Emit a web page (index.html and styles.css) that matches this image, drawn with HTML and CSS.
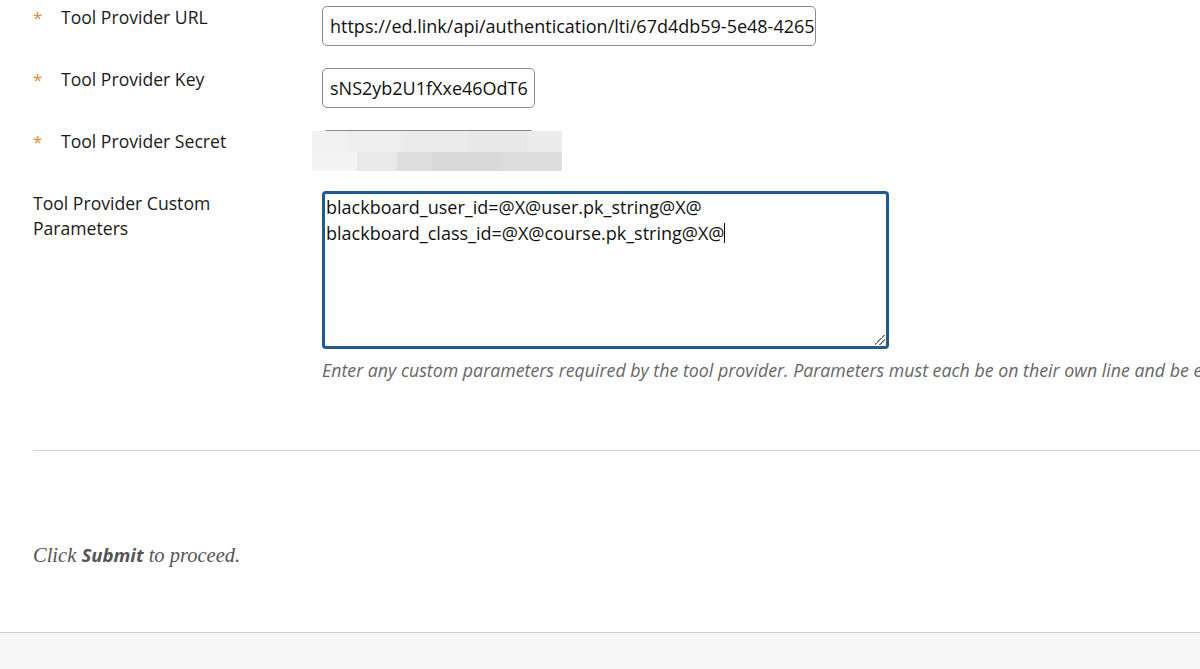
FILE: index.html
```html
<!DOCTYPE html>
<html>
<head>
<meta charset="utf-8">
<link rel="stylesheet" href="styles.css">
</head>
<body>
<div class="page">
  <div class="form">
    <div class="row">
      <div class="label"><span class="req">*</span>Tool Provider URL</div>
      <div class="field"><div class="input url">https://ed.link/api/authentication/lti/67d4db59-5e48-4265-b</div></div>
    </div>
    <div class="row">
      <div class="label"><span class="req">*</span>Tool Provider Key</div>
      <div class="field"><div class="input key">sNS2yb2U1fXxe46OdT6</div></div>
    </div>
    <div class="row">
      <div class="label"><span class="req">*</span>Tool Provider Secret</div>
      <div class="field secret-field">
        <div class="input key">&nbsp;</div>
        <div class="blur"><div class="blur-top"></div><div class="blur-bottom"></div></div>
      </div>
    </div>
    <div class="row row-area">
      <div class="label plain">Tool Provider Custom<br>Parameters</div>
      <div class="field">
        <div class="textarea">blackboard_user_id=@X@user.pk_string@X@<br>blackboard_class_id=@X@course.pk_string@X@<span class="caret"></span><span class="grip"></span></div>
        <div class="help">Enter any custom parameters required by the tool provider. Parameters must each be on their own line and be entered as name=value pairs.</div>
      </div>
    </div>
  </div>
  <hr class="divider">
  <p class="submit-note">Click <b>Submit</b> to proceed.</p>
</div>
<div class="footer"></div>
</body>
</html>
```
FILE: styles.css
```css
html, body {
  margin: 0;
  padding: 0;
  background: #fff;
  overflow: hidden;
}
body {
  width: 1200px;
  height: 669px;
  font-family: "Open Sans", "Liberation Sans", sans-serif;
  color: #111;
  position: relative;
}
.page {
  padding-left: 33px;
  height: 632px;
  box-sizing: border-box;
}
.form {
  padding-top: 6px;
}
.row {
  display: flex;
  height: 62px;
}
.row-area {
  height: auto;
  margin-top: -1px;
}
.label {
  width: 289px;
  flex: none;
  font-size: 17.6px;
  line-height: 25px;
  color: #1a1a1a;
  margin-top: -1px;
}
.label.plain {
  margin-top: 0;
}
.req {
  display: inline-block;
  width: 28px;
  color: #d98d3a;
  font-size: 17px;
}
.field {
  flex: 1;
  min-width: 0;
  position: relative;
}
.input {
  box-sizing: border-box;
  height: 40px;
  border: 1px solid #8a8a8a;
  border-radius: 5px;
  font-size: 18px;
  line-height: 38px;
  padding: 0 7px;
  white-space: nowrap;
  overflow: hidden;
  color: #111;
  background: #fff;
}
.input.url {
  width: 494px;
}
.input.key {
  width: 213px;
}
.secret-field .blur {
  position: absolute;
  left: -10px;
  top: 1px;
  width: 250px;
  height: 40px;
}
.blur-top {
  height: 21px;
  background: linear-gradient(to right,
    #f2f2f2 0 14%, #eeeeee 14% 36%, #ebebeb 36% 62%, #e8e8e8 62% 86%, #ececec 86% 100%);
}
.blur-bottom {
  height: 19px;
  background: linear-gradient(to right,
    #f4f4f4 0 18%, #e9e9e9 18% 34%, #dedede 34% 48%, #d9d9d9 48% 76%, #dcdcdc 76% 100%);
}
.textarea {
  box-sizing: border-box;
  width: 567px;
  height: 158px;
  border: 3px solid #1f5b91;
  border-radius: 4px;
  font-size: 18px;
  line-height: 26px;
  padding: 0 1px;
  color: #111;
  position: relative;
  white-space: nowrap;
}
.caret {
  display: inline-block;
  width: 1px;
  height: 20px;
  background: #111;
  vertical-align: -3px;
}
.grip {
  position: absolute;
  right: 1px;
  bottom: 1px;
  width: 10px;
  height: 10px;
  background: linear-gradient(135deg, transparent 0 45%, #777 45% 52%, transparent 52% 70%, #777 70% 77%, transparent 77%);
}
.help {
  margin-top: 9px;
  font-size: 17.8px;
  line-height: 24px;
  font-style: italic;
  color: #666;
  white-space: nowrap;
}
.divider {
  margin: 68px 0 0 0;
  border: 0;
  border-top: 1px solid #cfcfcf;
  height: 0;
}
.submit-note {
  margin: 91px 0 0 0;
  font-family: "Liberation Serif", "DejaVu Serif", serif;
  font-style: italic;
  font-size: 20.5px;
  line-height: 26px;
  color: #555;
}
.submit-note b {
  font-family: "Open Sans", "Liberation Sans", sans-serif;
  font-weight: 700;
  font-size: 18.6px;
}
.footer {
  height: 37px;
  border-top: 1px solid #cfcfcf;
  background: #f7f7f7;
}
```
